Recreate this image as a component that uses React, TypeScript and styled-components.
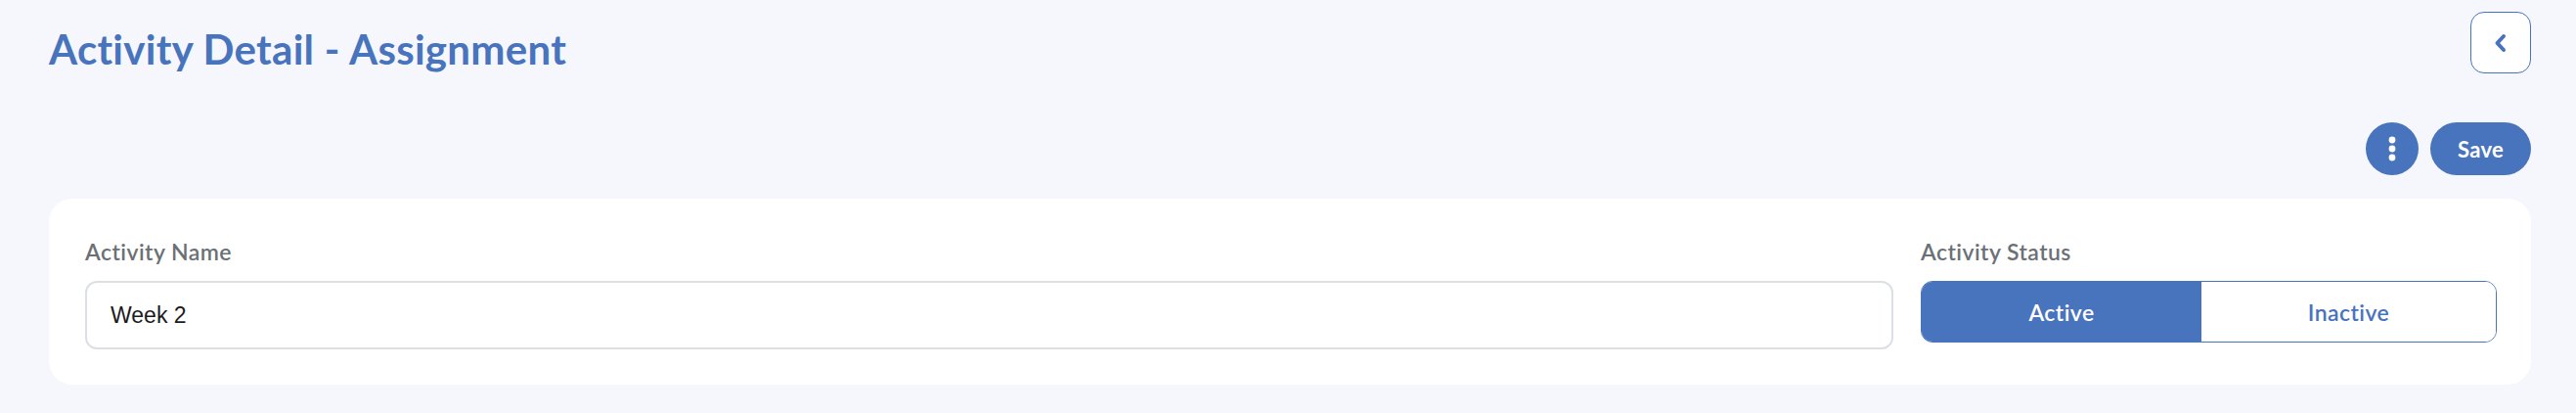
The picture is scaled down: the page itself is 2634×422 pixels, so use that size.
import React from "react";
import styled, { createGlobalStyle } from "styled-components";

const Global = createGlobalStyle`
  html, body { margin: 0; padding: 0; background: #f6f7fc; }
  body { font-family: Lato, "Open Sans", sans-serif; }
  * { box-sizing: border-box; }
`;

const BLUE = "#4873bd";

const Page = styled.div`
  padding: 12px 46px 0 50px;
  min-height: 422px;
  background: #f6f7fc;
`;

const Header = styled.header`
  display: flex;
  justify-content: space-between;
  align-items: flex-start;
`;

const Title = styled.h1`
  margin: 0;
  padding-top: 13px;
  font-family: Lato, sans-serif;
  font-weight: 700;
  font-size: 42px;
  line-height: 50px;
  color: ${BLUE};
  letter-spacing: 0.3px;
`;

const BackButton = styled.button`
  width: 62px;
  height: 63px;
  border: 1.5px solid ${BLUE};
  border-radius: 14px;
  background: #fff;
  display: flex;
  align-items: center;
  justify-content: center;
  padding: 0;
  cursor: pointer;
`;

const Actions = styled.div`
  display: flex;
  justify-content: flex-end;
  gap: 12px;
  margin-top: 50px;
`;

const CircleButton = styled.button`
  width: 54px;
  height: 54px;
  border-radius: 50%;
  border: none;
  background: ${BLUE};
  display: flex;
  align-items: center;
  justify-content: center;
  padding: 0;
`;

const PillButton = styled.button`
  width: 103px;
  height: 54px;
  border-radius: 27px;
  border: none;
  background: ${BLUE};
  color: #fff;
  font-family: Lato, sans-serif;
  font-weight: 700;
  font-size: 22px;
  letter-spacing: 0.3px;
  padding: 0;
`;

const Card = styled.section`
  margin-top: 24px;
  background: #fff;
  border-radius: 24px;
  padding: 40px 35px 36px 37px;
  display: grid;
  grid-template-columns: 1fr 589px;
  column-gap: 28px;
`;

const Field = styled.div`
  display: flex;
  flex-direction: column;
`;

const Label = styled.label`
  font-family: Lato, sans-serif;
  font-weight: 600;
  font-size: 23px;
  letter-spacing: 0.45px;
  line-height: 28px;
  color: #6b7076;
  margin-bottom: 16px;
`;

const Input = styled.input`
  height: 70px;
  border: 2px solid #dce0e4;
  border-radius: 12px;
  padding: 0 24px;
  font-family: "Liberation Sans", Arial, sans-serif;
  font-size: 23px;
  color: #1b1b1d;
  background: #fff;
  outline: none;
`;

const Segmented = styled.div`
  display: grid;
  grid-template-columns: 286px 1fr;
  height: 63px;
  border: 1.5px solid ${BLUE};
  border-radius: 12px;
  overflow: hidden;
`;

const Segment = styled.button<{ $active?: boolean }>`
  border: none;
  padding: 0;
  background: ${(p) => (p.$active ? BLUE : "#fff")};
  color: ${(p) => (p.$active ? "#fff" : BLUE)};
  font-family: Lato, sans-serif;
  font-weight: 600;
  font-size: 23px;
  letter-spacing: 0.45px;
`;

export default function App() {
  return (
    <>
      <Global />
      <Page>
        <Header>
          <Title>Activity Detail - Assignment</Title>
          <BackButton aria-label="Back">
            <svg width="14" height="20" viewBox="0 0 14 20">
              <polyline
                points="10,3 3.5,10 10,17"
                fill="none"
                stroke={BLUE}
                strokeWidth="4"
                strokeLinecap="round"
                strokeLinejoin="round"
              />
            </svg>
          </BackButton>
        </Header>
        <Actions>
          <CircleButton aria-label="More">
            <svg width="8" height="26" viewBox="0 0 8 26">
              <circle cx="4" cy="4" r="3.4" fill="#fff" />
              <circle cx="4" cy="13" r="3.4" fill="#fff" />
              <circle cx="4" cy="22" r="3.4" fill="#fff" />
            </svg>
          </CircleButton>
          <PillButton>Save</PillButton>
        </Actions>
        <Card>
          <Field>
            <Label>Activity Name</Label>
            <Input defaultValue="Week 2" />
          </Field>
          <Field>
            <Label>Activity Status</Label>
            <Segmented>
              <Segment $active>Active</Segment>
              <Segment>Inactive</Segment>
            </Segmented>
          </Field>
        </Card>
      </Page>
    </>
  );
}
